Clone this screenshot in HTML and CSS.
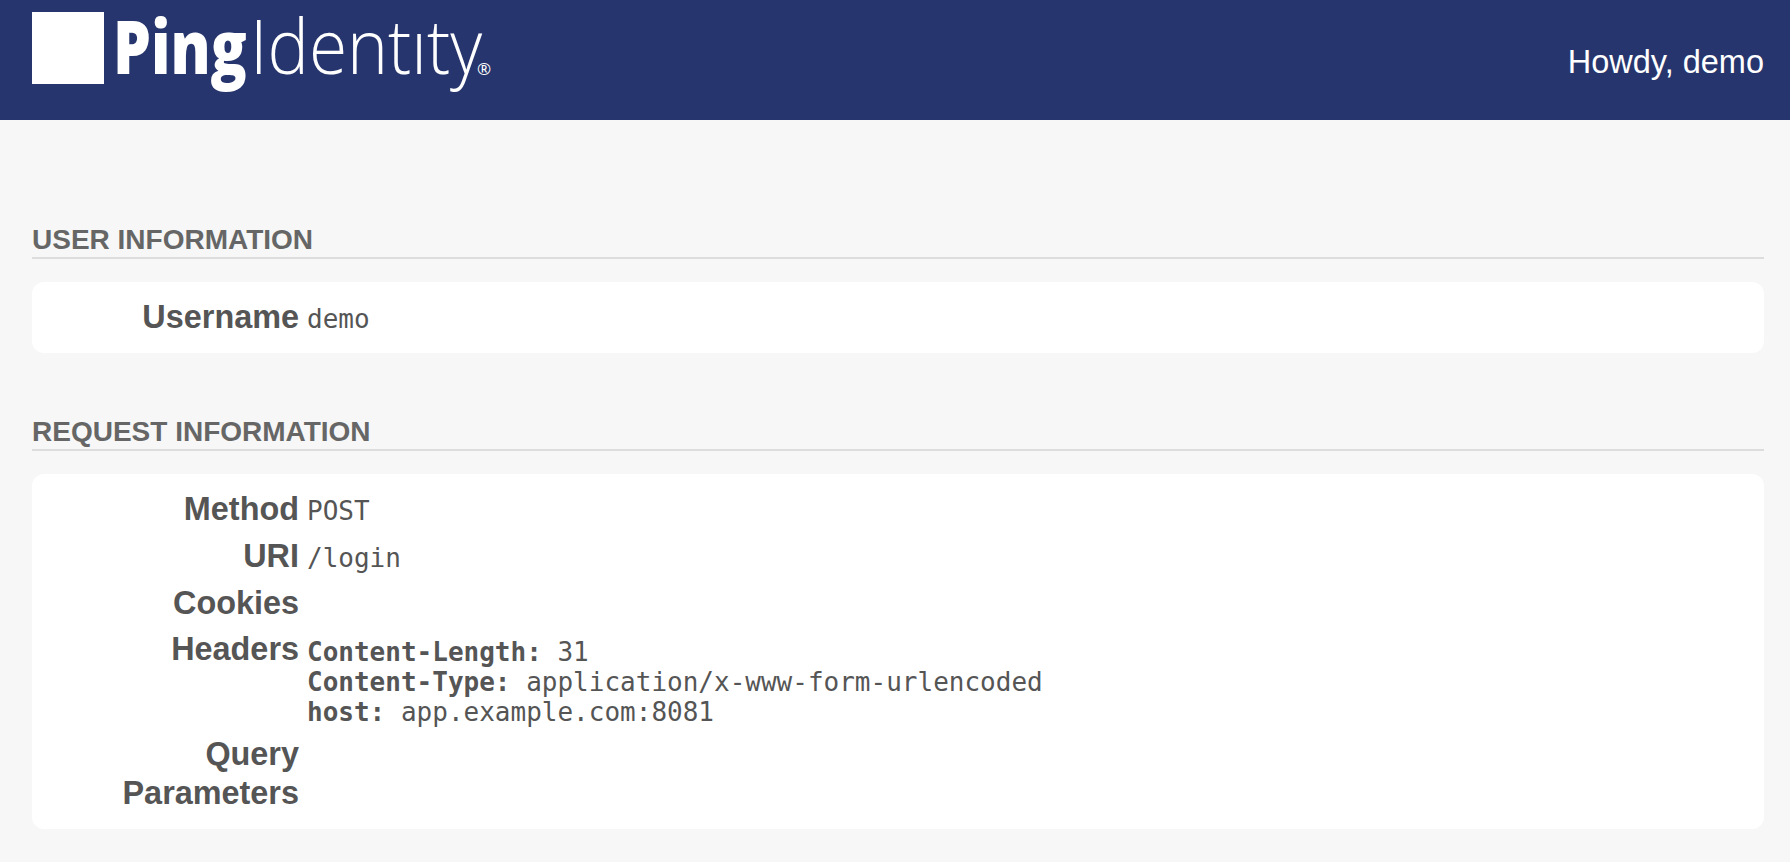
FILE: index.html
```html
<!DOCTYPE html>
<html lang="en">
<head>
  <meta charset="UTF-8" />
  <meta name="viewport" content="width=device-width, initial-scale=1.0"/>
  <title>Ping Identity - Request Information</title>
  <link rel="stylesheet" href="styles.css">
</head>
<body>
  <header class="topbar">
    <svg class="logo" width="460" height="96" viewBox="0 0 460 96" role="img" aria-label="Ping Identity">
      <rect width="72" height="72" fill="#fff"/>
      <text class="logo-ping" transform="translate(81 62) scale(0.8 1)">Ping</text>
      <text class="logo-identity" transform="translate(218 62) scale(0.927 1)">Identıty</text>
      <text class="logo-mark" x="445" y="63">®</text>
    </svg>
    <div class="greeting">Howdy, demo</div>
  </header>

  <main class="content">
    <section class="panel">
      <h2>User Information</h2>
      <div class="card">
        <div class="row">
          <div class="label">Username</div>
          <div class="value">demo</div>
        </div>
      </div>
    </section>

    <section class="panel">
      <h2>Request Information</h2>
      <div class="card">
        <div class="row">
          <div class="label">Method</div>
          <div class="value">POST</div>
        </div>
        <div class="row">
          <div class="label">URI</div>
          <div class="value">/login</div>
        </div>
        <div class="row">
          <div class="label">Cookies</div>
          <div class="value"></div>
        </div>
        <div class="row">
          <div class="label">Headers</div>
          <div class="value headers">
            <div><b>Content-Length:</b> 31</div>
            <div><b>Content-Type:</b> application/x-www-form-urlencoded</div>
            <div><b>host:</b> app.example.com:8081</div>
          </div>
        </div>
        <div class="row row-last">
          <div class="label">Query Parameters</div>
          <div class="value"></div>
        </div>
      </div>
    </section>
  </main>
</body>
</html>
```

FILE: styles.css
```css
body {
  margin: 0;
  font-family: "Liberation Sans", Arial, sans-serif;
  background: #f7f7f7;
  color: #555555;
}

.topbar {
  display: flex;
  justify-content: space-between;
  align-items: center;
  height: 120px;
  padding: 0 26px 0 32px;
  background: #26356d;
  color: #ffffff;
}

.logo {
  display: block;
  overflow: visible;
}

.logo text {
  fill: #ffffff;
  font-family: "Open Sans", sans-serif;
  font-size: 75px;
}

.logo .logo-ping {
  font-weight: 800;
}

.logo .logo-identity {
  font-weight: 300;
}

.logo .logo-mark {
  font-size: 17px;
}

.greeting {
  padding-top: 4px;
  font-size: 32.5px;
  line-height: 40px;
}

.content {
  padding: 100px 26px 0 32px;
}

.panel {
  margin-bottom: 59px;
}

h2 {
  margin: 0 0 23px;
  padding-top: 2px;
  border-bottom: 2px solid #dddddd;
  color: #666666;
  font-size: 28px;
  line-height: 35px;
  text-transform: uppercase;
}

.card {
  padding: 18px 0 6px;
  border-radius: 12px;
  background: #ffffff;
}

.row {
  display: flex;
  gap: 8px;
  margin-bottom: 9px;
}

.row-last {
  margin-bottom: 10px;
}

.label {
  width: 267px;
  margin-top: -2px;
  font-size: 32.4px;
  font-weight: bold;
  line-height: 39px;
  text-align: right;
}

.value {
  font-family: "DejaVu Sans Mono", monospace;
  font-size: 26px;
  line-height: 38px;
}

.headers {
  padding: 5px 0 1px;
  line-height: 30px;
}
```
